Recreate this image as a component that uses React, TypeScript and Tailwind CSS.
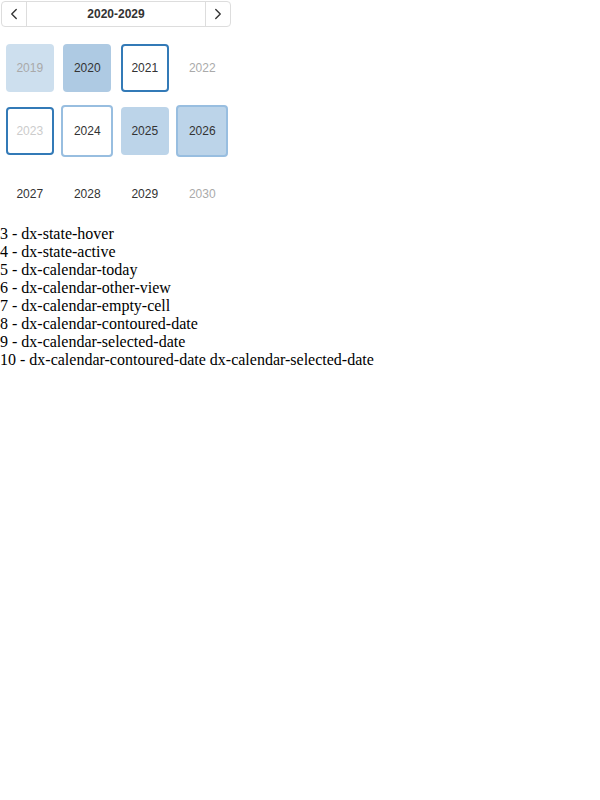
import { ChevronLeft, ChevronRight } from "lucide-react";

type Cell = { year: number; box: string; text: string };

const ROWS: Cell[][] = [
  [
    { year: 2019, box: "w-12 h-12 bg-[#cddfee]", text: "text-[#a9a9a9]" },
    { year: 2020, box: "w-12 h-12 bg-[#aecae3]", text: "text-[#333]" },
    { year: 2021, box: "w-12 h-12 border-2 border-[#337ab7]", text: "text-[#333]" },
    { year: 2022, box: "w-12 h-12", text: "text-[#aaa]" },
  ],
  [
    { year: 2023, box: "w-12 h-12 border-2 border-[#337ab7]", text: "text-[#ccc]" },
    { year: 2024, box: "w-[52px] h-[52px] border-2 border-[#98bee0]", text: "text-[#333]" },
    { year: 2025, box: "w-12 h-12 bg-[#bcd4e9]", text: "text-[#333]" },
    { year: 2026, box: "w-[52px] h-[52px] bg-[#bcd4e9] border-2 border-[#98bee0]", text: "text-[#333]" },
  ],
  [
    { year: 2027, box: "w-12 h-12", text: "text-[#333]" },
    { year: 2028, box: "w-12 h-12", text: "text-[#333]" },
    { year: 2029, box: "w-12 h-12", text: "text-[#333]" },
    { year: 2030, box: "w-12 h-12", text: "text-[#aaa]" },
  ],
];

const NOTES = [
  "3 - dx-state-hover",
  "4 - dx-state-active",
  "5 - dx-calendar-today",
  "6 - dx-calendar-other-view",
  "7 - dx-calendar-empty-cell",
  "8 - dx-calendar-contoured-date",
  "9 - dx-calendar-selected-date",
  "10 - dx-calendar-contoured-date dx-calendar-selected-date",
];

export default function App() {
  return (
    <div className="bg-white min-h-[800px]">
      {/* Calendar */}
      <div className="w-[231px] pl-px pt-px font-['Liberation_Sans',Arial,sans-serif] text-[12px]">
        <div className="flex h-[26px] border border-[#ddd] rounded-[4px] text-[#333]">
          <button className="w-[25px] flex items-center justify-center border-r border-[#ddd]">
            <ChevronLeft size={18} strokeWidth={1.8} className="text-[#333]" />
          </button>
          <div className="flex-1 flex items-center justify-center font-bold">2020-2029</div>
          <button className="w-[25px] flex items-center justify-center border-l border-[#ddd]">
            <ChevronRight size={18} strokeWidth={1.8} className="text-[#333]" />
          </button>
        </div>

        <div className="mt-[9px]">
          {ROWS.map((row, i) => (
            <div key={i} className="grid grid-cols-4 h-[63px]">
              {row.map(c => (
                <div key={c.year} className="flex items-center justify-center">
                  <div className={`${c.box} ${c.text} rounded-[4px] flex items-center justify-center`}>
                    {c.year}
                  </div>
                </div>
              ))}
            </div>
          ))}
        </div>
      </div>

      {/* Legend */}
      <div className="font-['Liberation_Serif','Times_New_Roman',serif] text-[16px] leading-[18px] text-black">
        {NOTES.map(n => (
          <div key={n}>{n}</div>
        ))}
      </div>
    </div>
  );
}
